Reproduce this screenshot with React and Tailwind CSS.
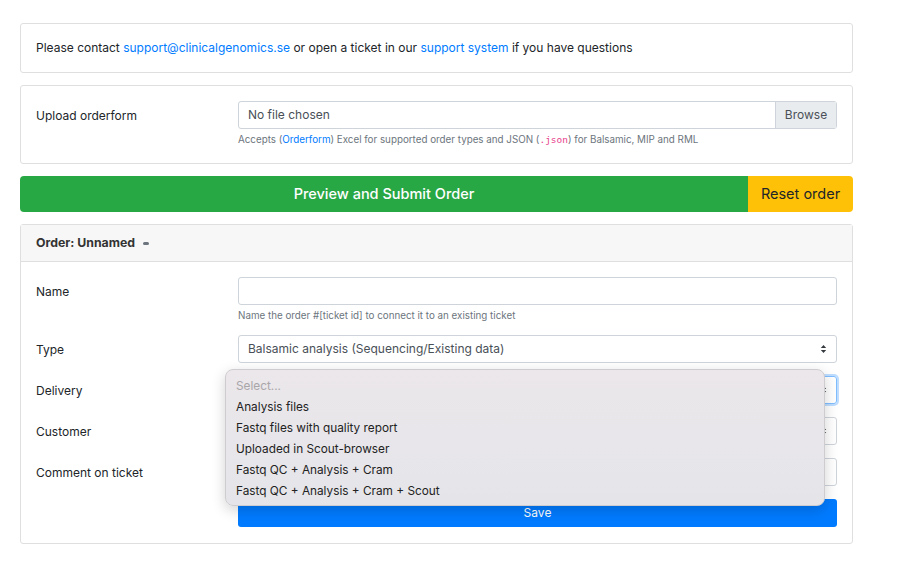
import React from "react"

const font = { fontFamily: "Inter, 'Noto Sans', sans-serif" }

function Chevrons() {
  return (
    <svg width="7" height="10" viewBox="0 0 7 10" className="text-[#343a40]">
      <path d="M3.5 1 L6.2 4 L0.8 4 Z" fill="currentColor" />
      <path d="M3.5 9 L6.2 6 L0.8 6 Z" fill="currentColor" />
    </svg>
  )
}

function Row({ label, children, help }) {
  return (
    <div className="flex mb-[13px]">
      <div className="w-[202px] shrink-0 h-[28px] pt-[1px] flex items-center text-[12px] text-[#212529]">{label}</div>
      <div className="flex-1">
        {children}
        {help && <div className="text-[9.8px] text-[#6c757d] mt-[5px] leading-[12px]">{help}</div>}
      </div>
    </div>
  )
}

export default function App() {
  const options = [
    "Analysis files",
    "Fastq files with quality report",
    "Uploaded in Scout-browser",
    "Fastq QC + Analysis + Cram",
    "Fastq QC + Analysis + Cram + Scout",
  ]

  return (
    <div className="w-[900px] h-[563px] bg-white overflow-hidden relative" style={font}>
      <div className="w-[833px] ml-[20px] pt-[23px]">

        {/* CONTACT */}
        <div className="border border-[#dfdfdf] rounded-[3px] h-[50px] px-[15px] flex items-center text-[12px] text-[#212529]">
          <p>
            Please contact <span className="text-[#007bff]">support@clinicalgenomics.se</span> or open a ticket in our{" "}
            <span className="text-[#007bff]">support system</span> if you have questions
          </p>
        </div>

        {/* UPLOAD */}
        <div className="border border-[#dfdfdf] rounded-[3px] mt-[12px] h-[79px] px-[15px] pt-[15px]">
          <Row label="Upload orderform" help={
            <>Accepts (<span className="text-[#007bff]">Orderform</span>) Excel for supported order types and JSON (<code className="text-[#e83e8c] text-[9.5px]" style={{ fontFamily: "'DejaVu Sans Mono', monospace" }}>.json</code>) for Balsamic, MIP and RML</>
          }>
            <div className="flex h-[28px] border border-[#ced4da] rounded-[3px] text-[12px]">
              <div className="flex-1 flex items-center px-[9px] text-[#495057]">No file chosen</div>
              <div className="w-[61px] bg-[#e9ecef] border-l border-[#ced4da] flex items-center justify-center text-[#495057]">Browse</div>
            </div>
          </Row>
        </div>

        {/* BUTTONS */}
        <div className="flex mt-[12px] h-[36px] rounded-[4px] overflow-hidden text-[14.5px]">
          <div className="flex-1 bg-[#28a745] text-white flex items-center justify-center font-medium">Preview and Submit Order</div>
          <div className="w-[105px] bg-[#ffc107] text-[#212529] flex items-center justify-center">Reset order</div>
        </div>

        {/* ORDER */}
        <div className="border border-[#dfdfdf] rounded-[3px] mt-[12px]">
          <div className="h-[37px] bg-[#f7f7f7] border-b border-[#dfdfdf] px-[15px] flex items-center gap-[8px] text-[12.3px] font-bold text-[#333]">
            Order: Unnamed
            <span className="w-[6px] h-[3px] rounded-full bg-[#6c757d] mt-[1px]"></span>
          </div>
          <div className="px-[15px] pt-[15px] pb-[16px]">
            <Row label="Name" help="Name the order #[ticket id] to connect it to an existing ticket">
              <div className="h-[28px] border border-[#ced4da] rounded-[3px]"></div>
            </Row>
            <Row label="Type">
              <div className="h-[28px] border border-[#ced4da] rounded-[3px] flex items-center justify-between px-[9px] text-[12px] text-[#495057]">
                Balsamic analysis (Sequencing/Existing data)
                <Chevrons />
              </div>
            </Row>
            <Row label="Delivery">
              <div className="h-[28px] border border-[#80bdff] rounded-[3px] shadow-[0_0_0_2px_rgba(0,123,255,0.25)] flex items-center justify-end px-[9px]">
                <Chevrons />
              </div>
            </Row>
            <Row label="Customer">
              <div className="h-[28px] border border-[#ced4da] rounded-[3px] flex items-center justify-end px-[9px]">
                <Chevrons />
              </div>
            </Row>
            <Row label="Comment on ticket">
              <div className="h-[28px] border border-[#ced4da] rounded-[3px]"></div>
            </Row>
            <div className="flex">
              <div className="w-[202px] shrink-0"></div>
              <div className="flex-1 h-[28px] bg-[#007bff] rounded-[3px] text-white text-[12px] flex items-center justify-center">Save</div>
            </div>
          </div>
        </div>
      </div>

      {/* DROPDOWN MENU */}
      <div className="absolute left-[225px] top-[369px] w-[600px] h-[137px] rounded-[8px] border border-[#cfcccf] bg-gradient-to-b from-[#ebe7eb] to-[#e5e5e9] shadow-[0_4px_14px_rgba(0,0,0,0.18)] pt-[6px] px-[10px] text-[11.8px] text-[#222]">
        <div className="h-[21px] flex items-center text-[#a9a6a9]">Select...</div>
        {options.map((o) => (
          <div key={o} className="h-[21px] flex items-center">{o}</div>
        ))}
      </div>
    </div>
  )
}
